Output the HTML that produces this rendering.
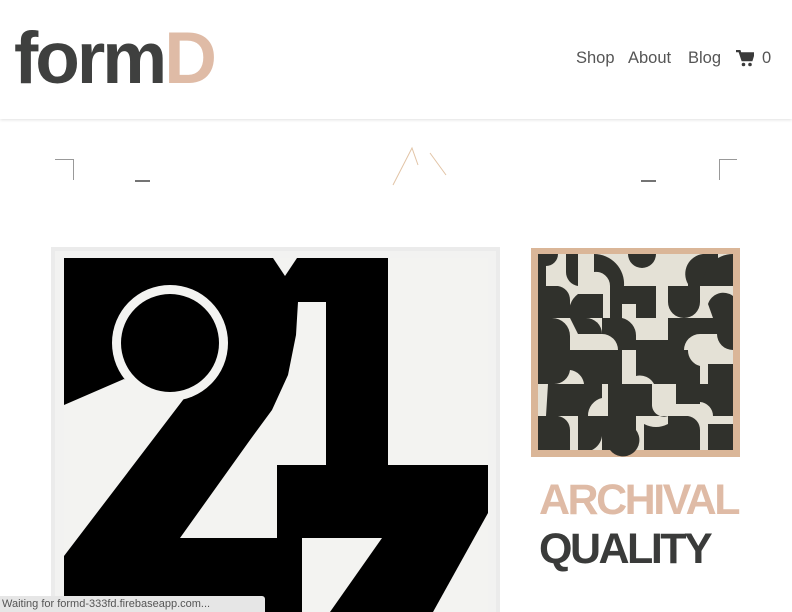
<!DOCTYPE html>
<html><head><meta charset="utf-8"><style>
html,body{margin:0;padding:0;width:792px;height:612px;overflow:hidden;background:#fff;font-family:"Liberation Sans",sans-serif;position:relative}
.hdr{position:absolute;left:0;top:0;width:792px;height:119px;background:#fff;box-shadow:0 1px 3px rgba(0,0,0,.12)}
.logo{position:absolute;left:14px;top:22px;font-weight:bold;font-size:73px;letter-spacing:-3px;color:#3f403f;line-height:1}
.logo span{color:#dfbba6}
.nav{position:absolute;top:49px;font-size:16.5px;color:#555}
.abs{position:absolute}
.txt{position:absolute;left:539px;font-weight:bold;font-size:43px;letter-spacing:-2.5px;line-height:1}
.status{position:absolute;left:0;top:596px;width:265px;height:16px;background:#e6e6e6;border-top-right-radius:3px;font-size:11px;color:#555;line-height:17px;padding-left:2px;box-sizing:border-box}
</style></head><body>
<div class="hdr">
<div class="logo">form<span>D</span></div>
<div class="nav" style="left:576px">Shop</div>
<div class="nav" style="left:628px">About</div>
<div class="nav" style="left:688px">Blog</div>
<svg class="abs" style="left:736px;top:50px" width="18" height="17" viewBox="0 0 18 17"><path d="M0 1h3.5l3 9h9l2-6.5H5" fill="none" stroke="#3a3a3a" stroke-width="2.4"/><path d="M4.5 3h13l-2 7h-8.5z" fill="#3a3a3a"/><circle cx="7.5" cy="14.5" r="1.8" fill="#3a3a3a"/><circle cx="14" cy="14.5" r="1.8" fill="#3a3a3a"/></svg>
<div class="nav" style="left:762px">0</div>
</div>
<svg class="abs" style="left:0;top:120px" width="792" height="120">
<path d="M55 39.5H73.5V60" fill="none" stroke="#999" stroke-width="1"/>
<path d="M737 39.5H719.5V60" fill="none" stroke="#999" stroke-width="1"/>
<path d="M135 61h15M641 61h15" stroke="#222" stroke-width="1.2"/>
<path d="M393 185L412 148L418 165M430 153L446 175" fill="none" stroke="#e2c4a6" stroke-width="1" transform="translate(0,-120)"/>
</svg>
<svg class="abs" style="left:0;top:0" width="792" height="612">
<rect x="51" y="247" width="449" height="380" fill="#ebebeb"/>
<rect x="55" y="251" width="441" height="380" fill="#f2f2f1"/>
<rect x="64" y="258" width="424" height="360" fill="#000"/>
<g fill="#f3f3f1">
<rect x="388" y="258" width="100" height="207"/>
<polygon points="273,258 297,258 285,276"/>
<polygon points="180,538 277,538 277,465 326,465 326,302 298,302 296,335 288,375 272,410 250,440"/>
<polygon points="64,405 124,379 150,393 186,396 64,556"/>
<circle cx="170" cy="343" r="58"/>
<polygon points="302,538 382,538 330,612 302,612"/>
<polygon points="488,513 488,612 433,612"/>
</g>
<circle cx="170" cy="343" r="49" fill="#000"/>
<rect x="531" y="248" width="209" height="209" fill="#dab698"/>
<rect x="538" y="254" width="195" height="196" fill="#e4e1d6"/>
<g fill="#30312c" transform="translate(538,254)">
<path d="M0 0h20a12 12 0 0 1-12 12v20H0z"/>
<path d="M28 0h12v32a14 14 0 0 1-12-14z"/>
<path d="M56 0a30 30 0 0 1 30 32H72a14 14 0 0 0-16-14z"/>
<path d="M90 0h28a14 14 0 0 1-28 0z"/>
<path d="M150 30a20 20 0 0 1 15-30h15v32h-30z"/>
<path d="M165 32h30V0a30 30 0 0 0-30 32z"/>
<path d="M0 32h20a14 14 0 0 1 12 14v18H0z"/>
<path d="M40 40h25v24H32a22 22 0 0 1 8-24z"/>
<path d="M72 32h26v18h-14v14H72z"/>
<path d="M98 32h20v32h-20z"/>
<path d="M130 32h32v16a16 16 0 0 1-32 0z"/>
<path d="M170 50a16 16 0 0 1 25-8v22h-20z"/>
<path d="M0 64h14a18 18 0 0 1 18 18v14H0z"/>
<path d="M32 64h16a16 16 0 0 1 16 16H40z"/>
<path d="M64 64h20a18 18 0 0 1 14 18v14H80a16 16 0 0 0-16-16z"/>
<path d="M98 86h32v22h-32z"/>
<path d="M130 64h32v16a16 16 0 0 0-16 16h-16z"/>
<path d="M162 64h33v32a16 16 0 0 1-16-16h-17z"/>
<path d="M0 96h32v20a16 16 0 0 1-16 14H0z"/>
<path d="M32 96h32v34H46a16 16 0 0 0-14-14z"/>
<path d="M64 96h20v34H64z"/>
<path d="M98 108h32v22h-14a16 16 0 0 0-18-8z"/>
<path d="M130 96h20a16 16 0 0 0 12 16v18h-32z"/>
<path d="M170 110h25v20h-25z"/>
<path d="M10 130h22v32H8z"/>
<path d="M32 130h32v14a18 18 0 0 0-14 18H32z"/>
<path d="M70 130h28v32H70z"/>
<path d="M98 130h16v20a12 12 0 0 0 16 12h-32z"/>
<path d="M138 130h24v20h-24z"/>
<path d="M162 130h33v32h-20a14 14 0 0 0-13-14z"/>
<path d="M0 162h20a14 14 0 0 1 12 14v20H0z"/>
<path d="M40 162h24v20a18 18 0 0 1-10 14h-14z"/>
<path d="M64 162h34v14a16 16 0 0 1-26 20h-8z"/>
<path d="M106 170q12 6 24 0v26h-24z"/>
<path d="M130 162h20a14 14 0 0 1 12 14v20h-32z"/>
<path d="M170 170h25v26h-25z"/>
</g>
</svg>
<div class="txt" style="top:479px;color:#dfbba6">ARCHIVAL</div>
<div class="txt" style="top:528px;color:#3a3b3a">QUALITY</div>
<div class="status">Waiting for formd-333fd.firebaseapp.com...</div>
</body></html>
